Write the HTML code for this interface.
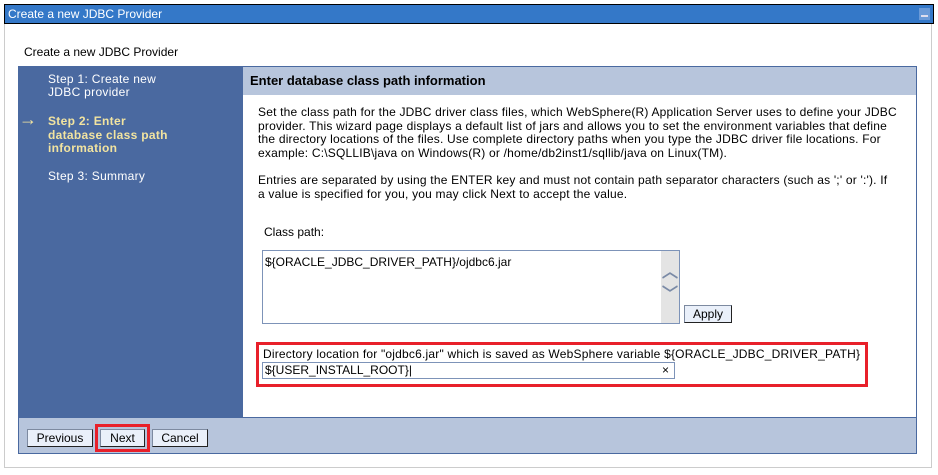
<!DOCTYPE html>
<html><head><style>
body{margin:0;width:938px;height:475px;background:#fff;font-family:"Liberation Sans",Arial,sans-serif;position:relative;overflow:hidden}
.a{position:absolute}
.t{font-size:12px;color:#000;white-space:nowrap}
.btn{position:absolute;background:#eaf0fa;border:1px solid #7d8aa0;border-right-color:#222;border-bottom-color:#222;font-size:12px;text-align:center;line-height:16px;box-sizing:border-box}
</style></head><body>
<div class="a" style="left:4px;top:23px;width:928px;height:445px;border:1px solid #ccc;border-top:none;box-sizing:border-box"></div>
<div class="a" style="left:4px;top:4px;width:930px;height:20px;background:#3478c8;border:1px solid #000;box-sizing:border-box;color:#fff;font-size:12px;line-height:18px;padding-left:3px">Create a new JDBC Provider</div>
<div class="a" style="left:919px;top:8px;width:11px;height:12px;background:#6a9ad8"><div class="a" style="left:2px;top:7px;width:7px;height:2px;background:#dde"></div></div>
<div class="a t" style="left:24px;top:45px">Create a new JDBC Provider</div>
<div class="a" style="left:18px;top:66px;width:225px;height:352px;background:#4a69a0"></div>
<div class="a" style="left:48px;top:73px;color:#fff;font-size:12px;line-height:13px;letter-spacing:0.3px">Step 1: Create new<br>JDBC provider</div>
<div class="a" style="left:19px;top:109px;color:#f2e4a0;font-size:18px;font-weight:bold">→</div>
<div class="a" style="left:48px;top:115px;color:#f2e4a0;font-size:12px;line-height:13.5px;font-weight:bold;letter-spacing:0.3px">Step 2: Enter<br>database class path<br>information</div>
<div class="a" style="left:48px;top:169px;color:#fff;font-size:12px;letter-spacing:0.3px">Step 3: Summary</div>
<div class="a" style="left:243px;top:66px;width:674px;height:352px;border:1px solid #4a69a0;border-left:none;box-sizing:border-box"></div>
<div class="a" style="left:243px;top:67px;width:673px;height:28px;background:#b7c5dc;font-weight:bold;font-size:13px;line-height:28px;padding-left:7px;box-sizing:border-box">Enter database class path information</div>
<div class="a t" style="left:258px;top:106px;line-height:13.5px;letter-spacing:0.2px">Set the class path for the JDBC driver class files, which WebSphere(R) Application Server uses to define your JDBC<br>provider. This wizard page displays a default list of jars and allows you to set the environment variables that define<br>the directory locations of the files. Use complete directory paths when you type the JDBC driver file locations. For<br>example: C:\SQLLIB\java on Windows(R) or /home/db2inst1/sqllib/java on Linux(TM).</div>
<div class="a t" style="left:258px;top:174px;line-height:13.5px;letter-spacing:0.2px">Entries are separated by using the ENTER key and must not contain path separator characters (such as ';' or ':'). If<br>a value is specified for you, you may click Next to accept the value.</div>
<div class="a t" style="left:264px;top:225px">Class path:</div>
<div class="a" style="left:262px;top:250px;width:418px;height:74px;border:1px solid #7d93b8;box-sizing:border-box;font-size:12px;padding:4px 2px">${ORACLE_JDBC_DRIVER_PATH}/ojdbc6.jar
<div class="a" style="right:0;top:0;width:18px;height:72px;background:#e4e4e4;color:#7a8aa6;font-size:16px;font-weight:bold;text-align:center;line-height:16px"><div style="margin-top:14px">︿</div><div style="margin-top:6px">﹀</div></div></div>
<div class="btn" style="left:684px;top:305px;width:48px;height:18px">Apply</div>
<div class="a" style="left:256px;top:342px;width:612px;height:45px;border:3px solid #e8202a;box-sizing:border-box"></div>
<div class="a" style="left:263px;top:347px;font-size:12px;letter-spacing:0.2px">Directory location for "ojdbc6.jar" which is saved as WebSphere variable ${ORACLE_JDBC_DRIVER_PATH}</div>
<div class="a" style="left:262px;top:362px;width:413px;height:17px;border:1px solid #7d93b8;box-sizing:border-box;font-size:12px;line-height:15px;padding-left:2px">${USER_INSTALL_ROOT}|<span class="a" style="right:5px;top:0">×</span></div>
<div class="a" style="left:18px;top:417px;width:899px;height:37px;background:#b7c5dc;border:1px solid #4a69a0;box-sizing:border-box"></div>
<div class="btn" style="left:27px;top:429px;width:66px;height:18px">Previous</div>
<div class="a" style="left:95px;top:424px;width:55px;height:28px;border:3px solid #e8202a;box-sizing:border-box"></div>
<div class="btn" style="left:100px;top:429px;width:45px;height:18px">Next</div>
<div class="btn" style="left:152px;top:429px;width:56px;height:18px">Cancel</div>
</body></html>
